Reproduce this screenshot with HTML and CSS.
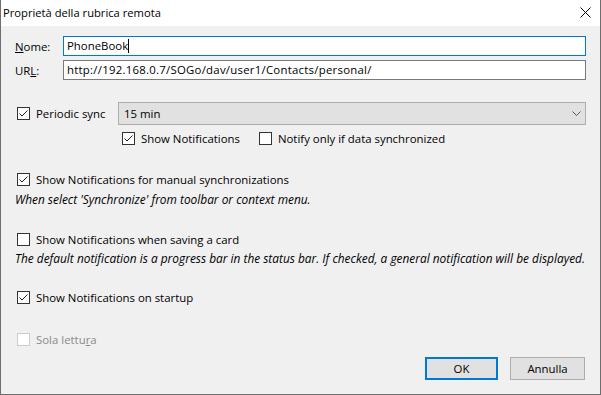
FILE: index.html
```html
<!DOCTYPE html>
<html>
<head>
	<meta charset="utf-8">
	<title>Proprietà della rubrica remota</title>
	<link rel="stylesheet" href="styles.css">
</head>
<body>
	<div class="window">
		<div class="titlebar">
			<span class="title">Proprietà della rubrica remota</span>
			<svg class="close" width="11" height="11" viewBox="0 0 11 11"><path d="M0.5 0.5L10.5 10.5M10.5 0.5L0.5 10.5" stroke="#000" stroke-width="1" fill="none"/></svg>
		</div>
		<div class="content">
			<div class="field">
				<span class="field-label"><u>N</u>ome:</span>
				<div class="textbox focused">PhoneBook<span class="caret"></span></div>
			</div>
			<div class="field">
				<span class="field-label">UR<u>L</u>:</span>
				<div class="textbox url">http://192.168.0.7/SOGo/dav/user1/Contacts/personal/</div>
			</div>

			<div class="sync-row">
				<div class="check">
					<span class="box"><svg width="11" height="11" viewBox="0 0 11 11"><path d="M1.5 5.5L4 8L9.5 2.5" stroke="#222" stroke-width="1" fill="none"/></svg></span>
					Periodic sync
				</div>
				<div class="select">
					<span>15 min</span>
					<svg class="chevron" width="9" height="5" viewBox="0 0 9 5"><path d="M0.5 0.5L4.5 4.5L8.5 0.5" stroke="#555" stroke-width="1" fill="none"/></svg>
				</div>
			</div>
			<div class="sub-row">
				<div class="check">
					<span class="box"><svg width="11" height="11" viewBox="0 0 11 11"><path d="M1.5 5.5L4 8L9.5 2.5" stroke="#222" stroke-width="1" fill="none"/></svg></span>
					Show Notifications
				</div>
				<div class="check">
					<span class="box"></span>
					Notify only if data synchronized
				</div>
			</div>

			<div class="check option manual">
				<span class="box"><svg width="11" height="11" viewBox="0 0 11 11"><path d="M1.5 5.5L4 8L9.5 2.5" stroke="#222" stroke-width="1" fill="none"/></svg></span>
				Show Notifications for manual synchronizations
			</div>
			<div class="hint">When select 'Synchronize' from toolbar or context menu.</div>

			<div class="check option saving">
				<span class="box"></span>
				Show Notifications when saving a card
			</div>
			<div class="hint hint-tight">The default notification is a progress bar in the status bar. If checked, a general notification will be displayed.</div>

			<div class="check option startup">
				<span class="box"><svg width="11" height="11" viewBox="0 0 11 11"><path d="M1.5 5.5L4 8L9.5 2.5" stroke="#222" stroke-width="1" fill="none"/></svg></span>
				Show Notifications on startup
			</div>

			<div class="check option readonly disabled">
				<span class="box"></span>
				<span>Sola lettu<u>r</u>a</span>
			</div>

			<div class="buttons">
				<div class="btn default">OK</div>
				<div class="btn">Annulla</div>
			</div>
		</div>
	</div>
</body>
</html>
```

FILE: styles.css
```css
body {
	margin: 0;
	background: #f0f0f0;
	font-family: 'Open Sans', 'Noto Sans', sans-serif;
	font-size: 11.4px;
	color: #000;
}
.window {
	width: 601px;
	height: 395px;
	box-sizing: border-box;
	border: 1px solid #6e6e6e;
	border-top: none;
	background: #f0f0f0;
	display: flex;
	flex-direction: column;
}
.titlebar {
	height: 26px;
	background: #fff;
	display: flex;
	align-items: center;
	justify-content: space-between;
	padding: 0 9px 0 2px;
	box-sizing: border-box;
}
.title {
	font-size: 11.2px;
	line-height: 26px;
}
.close {
	display: block;
	margin-bottom: 1px;
}
.content {
	padding: 10px 14px 0 14px;
	display: flex;
	flex-direction: column;
}
.field {
	display: flex;
	align-items: center;
	height: 20px;
	margin-bottom: 4px;
}
.field-label {
	width: 48px;
	flex-shrink: 0;
}
.textbox {
	flex: 1;
	height: 20px;
	box-sizing: border-box;
	border: 1px solid #7a7a7a;
	background: #fff;
	padding: 0 3px;
	line-height: 18px;
	white-space: nowrap;
	display: flex;
	align-items: center;
}
.textbox.focused {
	border-color: #0078d7;
}
.textbox.url {
	letter-spacing: 0.25px;
}
.caret {
	display: inline-block;
	width: 1px;
	height: 14px;
	background: #000;
}
.check {
	display: flex;
	align-items: center;
	height: 17px;
	padding-left: 2px;
	white-space: nowrap;
}
.box {
	width: 13px;
	height: 13px;
	box-sizing: border-box;
	border: 1px solid #333;
	background: #fff;
	margin-right: 6px;
	flex-shrink: 0;
	display: flex;
	align-items: center;
	justify-content: center;
}
.box svg {
	display: block;
}
.sync-row {
	display: flex;
	align-items: center;
	margin-top: 18px;
	height: 23px;
}
.sync-row .check {
	width: 101px;
}
.select {
	flex: 1;
	height: 23px;
	box-sizing: border-box;
	border: 1px solid #adadad;
	background: #e1e1e1;
	display: flex;
	align-items: center;
	justify-content: space-between;
	padding: 0 4px 0 5px;
}
.chevron {
	display: block;
}
.sub-row {
	display: flex;
	gap: 17px;
	margin-top: 5px;
	padding-left: 105px;
}
.option {
	margin-top: 24px;
}
.hint {
	font-style: italic;
	font-size: 11.9px;
	line-height: 17px;
	margin-top: 3px;
	white-space: nowrap;
}
.hint-tight {
	margin-top: 2px;
}
.saving {
	margin-top: 23px;
}
.startup {
	margin-top: 22px;
}
.readonly {
	margin-top: 25px;
}
.disabled {
	color: #8a8a8a;
}
.disabled .box {
	border-color: #cccccc;
}
.buttons {
	display: flex;
	justify-content: flex-end;
	gap: 12px;
	margin-top: 9px;
	margin-right: 1px;
}
.btn {
	width: 75px;
	height: 23px;
	box-sizing: border-box;
	border: 1px solid #adadad;
	background: #e1e1e1;
	display: flex;
	align-items: center;
	justify-content: center;
}
.btn.default {
	width: 73px;
	border: 2px solid #0078d7;
}
```
